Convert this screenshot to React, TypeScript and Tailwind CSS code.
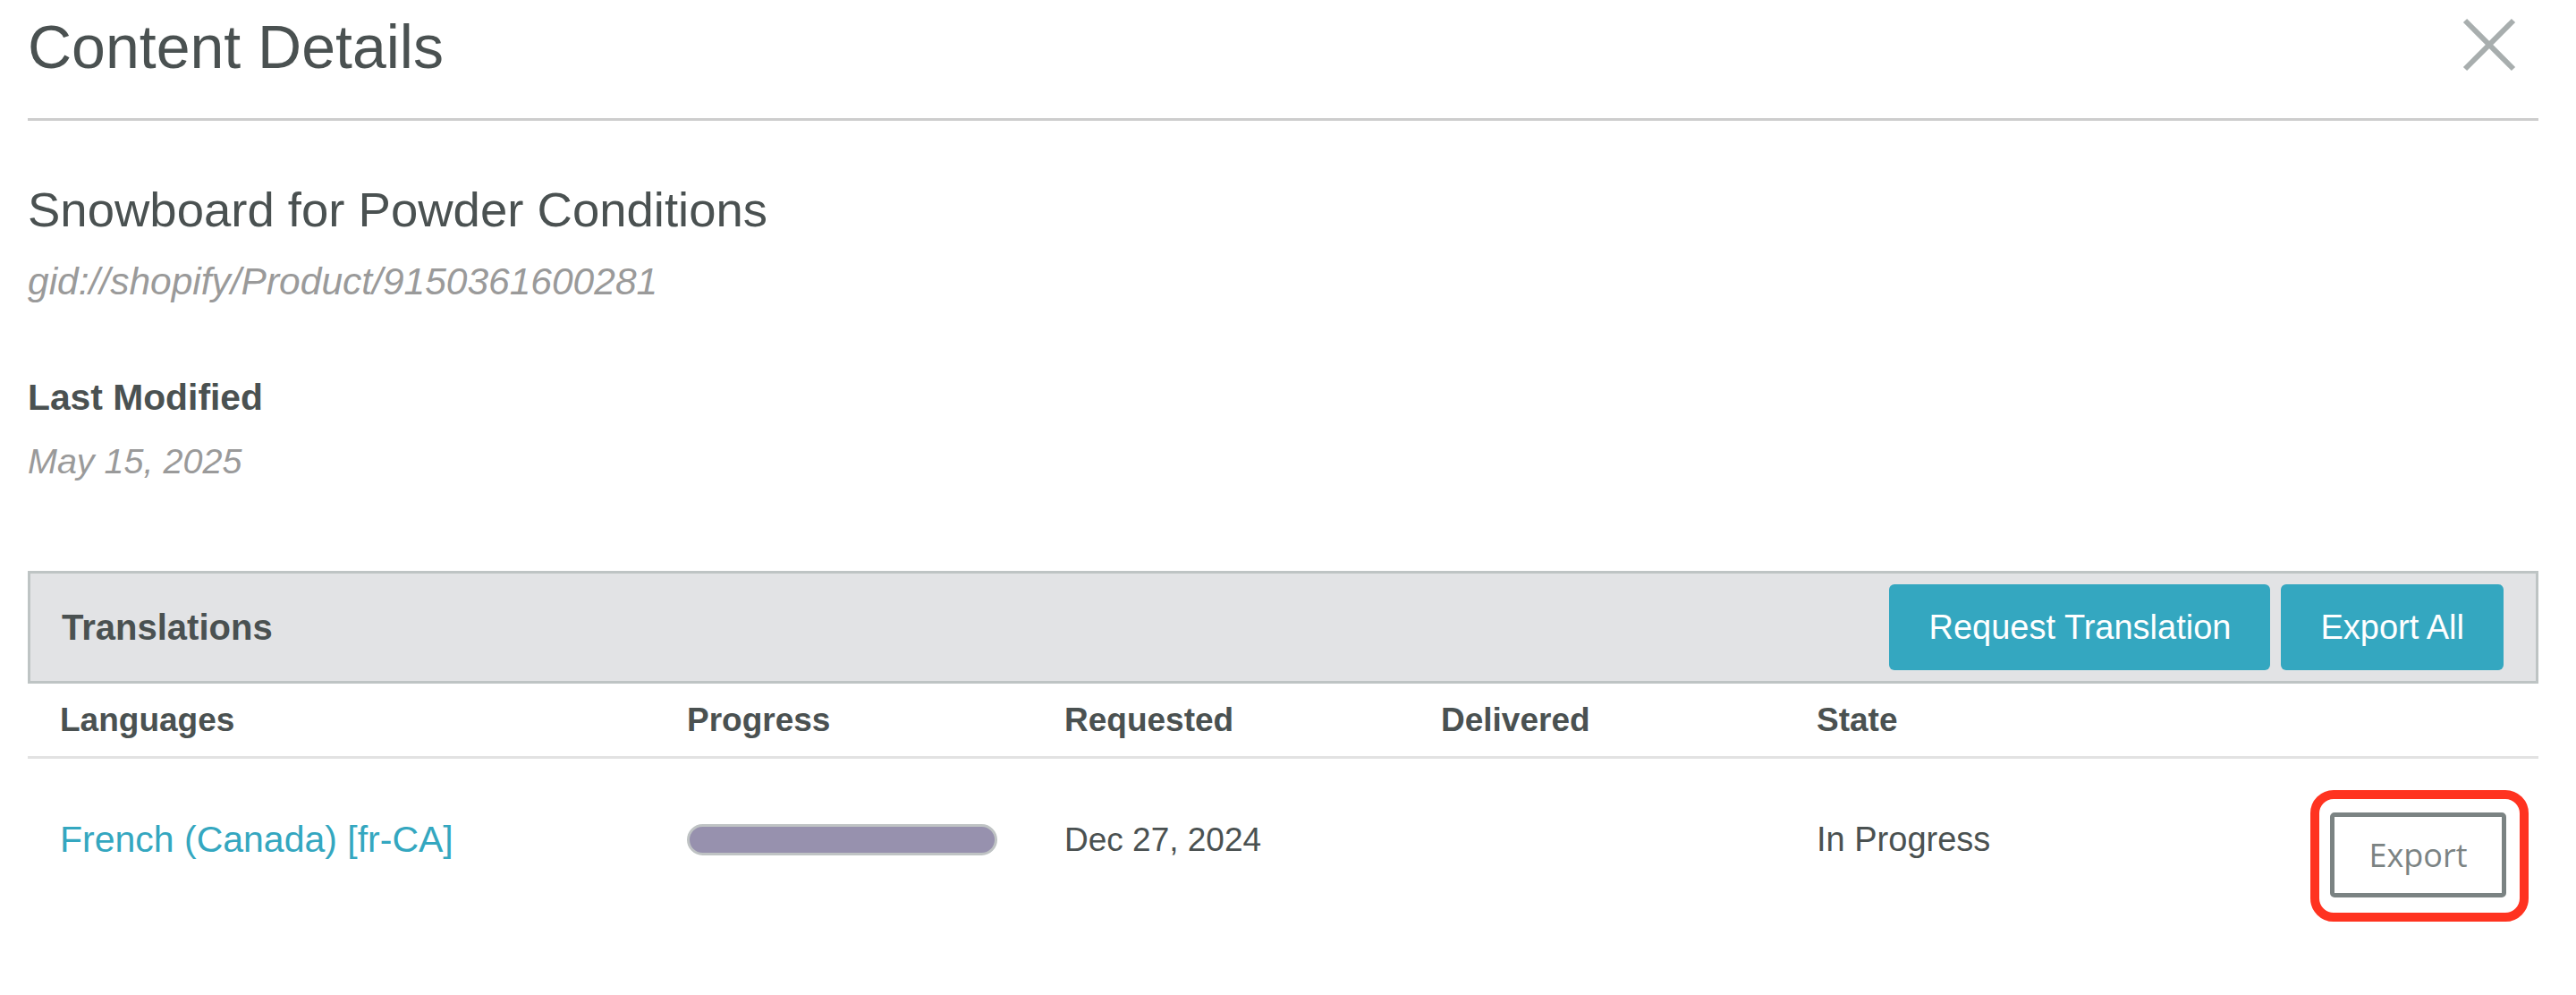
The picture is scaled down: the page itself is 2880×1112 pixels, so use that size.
import { ReactNode } from 'react'

const cols = 'grid grid-cols-[701px_422px_421px_420px_1fr_197px] pl-[36px] pr-[36px]'

function CloseIcon() {
    return (
        <svg width="60" height="60" viewBox="0 0 60 60" className="block">
            <line x1="3" y1="3" x2="57" y2="57" stroke="#a8aeae" strokeWidth="6" />
            <line x1="57" y1="3" x2="3" y2="57" stroke="#a8aeae" strokeWidth="6" />
        </svg>
    )
}

function HeadCell({ children }: { children?: ReactNode }) {
    return <div className="h-[81px] flex items-center text-[37px] font-bold leading-none text-[#4a5151]">{children}</div>
}

function Cell({ children }: { children?: ReactNode }) {
    return <div className="h-[60px] flex items-center text-[38px] leading-none text-[#4a5151]">{children}</div>
}

export default function App() {
    return (
        <div className="min-h-[1112px] bg-white pl-[31px] pr-[42px] font-['Liberation_Sans',Arial,sans-serif]">
            {/* header */}
            <div className="h-[132px] flex items-start justify-between">
                <h1 className="mt-[18px] text-[68px] leading-none font-normal text-[#4a5151]">Content Details</h1>
                <button className="mt-[20px] mr-[25px]">
                    <CloseIcon />
                </button>
            </div>
            <div className="h-[3px] bg-[#cdcdcd]" />

            {/* item info */}
            <div className="mt-[73px] text-[54.5px] leading-none text-[#4a5151]">Snowboard for Powder Conditions</div>
            <div className="mt-[31px] text-[42.5px] leading-none italic text-[#9a9a9a]">gid://shopify/Product/9150361600281</div>

            <div className="mt-[88px] text-[40.8px] leading-none font-bold text-[#4a5151]">Last Modified</div>
            <div className="mt-[31px] text-[39.5px] leading-none italic text-[#9a9a9a]">May 15, 2025</div>

            {/* translations */}
            <div className="mt-[103px] border-[3px] border-[#bec4c4] bg-[#e2e3e5] pl-[35px] pr-[36px] py-[12px] flex items-center justify-between">
                <div className="text-[40px] leading-none font-bold text-[#4a5151]">Translations</div>
                <div className="flex gap-[12px]">
                    <button className="h-[96px] px-[44px] rounded-[6px] bg-[#34a7c0] text-white text-[38px] leading-none">
                        Request Translation
                    </button>
                    <button className="h-[96px] px-[44px] rounded-[6px] bg-[#34a7c0] text-white text-[38px] leading-none">
                        Export All
                    </button>
                </div>
            </div>

            <div className={cols}>
                <HeadCell>Languages</HeadCell>
                <HeadCell>Progress</HeadCell>
                <HeadCell>Requested</HeadCell>
                <HeadCell>Delivered</HeadCell>
                <HeadCell>State</HeadCell>
                <HeadCell />
            </div>
            <div className="h-[3px] bg-[#e2e2e2]" />

            <div className={cols + ' pt-[60px] items-start'}>
                <Cell>
                    <a className="text-[41px] text-[#34a7c0]">French (Canada) [fr-CA]</a>
                </Cell>
                <Cell>
                    <div className="w-[347px] h-[35px] rounded-full border-[3px] border-[#bfc3c4] bg-[#9791ae]" />
                </Cell>
                <Cell>
                    <span className="text-[37px]">Dec 27, 2024</span>
                </Cell>
                <Cell />
                <Cell>In Progress</Cell>
                <div className="relative">
                    <div className="absolute -left-[22px] -top-[25px] w-[244px] h-[147px] rounded-[26px] border-[10px] border-[#ff3320]" />
                    <button className="w-[197px] h-[95px] rounded-[5px] border-[5px] border-[#7b8383] bg-white text-[36px] leading-none text-[#7b8383] font-['Open_Sans',sans-serif]">
                        Export
                    </button>
                </div>
            </div>
        </div>
    )
}
